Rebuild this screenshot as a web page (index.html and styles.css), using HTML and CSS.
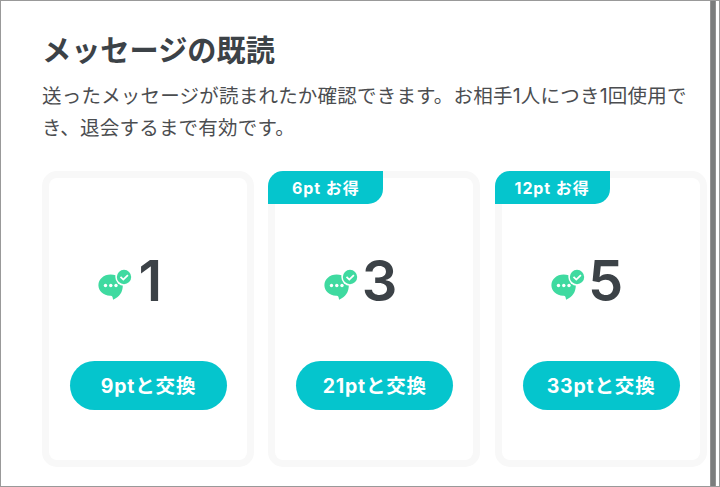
FILE: index.html
```html
<!DOCTYPE html>
<html lang="ja">
<head>
<meta charset="utf-8">
<title>メッセージの既読</title>
<link rel="stylesheet" href="styles.css">
</head>
<body>
<svg class="symbols" aria-hidden="true">
  <symbol id="read" viewBox="0 0 34 32">
    <path fill="#3fdaa0" d="M12.600 5.500C5.600 5.500 .4 10.300.4 16.300c0 5.800 5 10.300 11.600 10.500 1.300 0 2.300.3 2.500 1.300l.6 2.600C21.500 28 24.800 23 24.800 16.500 24.800 10.300 19.600 5.500 12.600 5.500z"/>
    <circle cx="26" cy="8" r="8.700" fill="#fff"/>
    <circle cx="26" cy="8" r="7.200" fill="#3fdaa0"/>
    <path d="M22.500 7.900l2.800 2.700 4.600-4.500" fill="none" stroke="#fff" stroke-width="1.800"/>
    <g fill="#fff"><circle cx="7.500" cy="16.500" r="1.700"/><circle cx="12.800" cy="16.500" r="1.700"/><circle cx="18" cy="16.500" r="1.700"/></g>
  </symbol>
</svg>
<div class="frame">
  <main class="content">
    <h1 class="title">メッセージの既読</h1>
    <p class="description">送ったメッセージが読まれたか確認できます。お相手1人につき1回使用で<br>き、退会するまで有効です。</p>
    <div class="plans">
      <section class="card">
        <div class="amount"><svg class="icon"><use href="#read"/></svg><span class="count count-narrow">1</span></div>
        <button class="exchange">9ptと交換</button>
      </section>
      <section class="card">
        <span class="badge">6pt お得</span>
        <div class="amount"><svg class="icon"><use href="#read"/></svg><span class="count">3</span></div>
        <button class="exchange">21ptと交換</button>
      </section>
      <section class="card">
        <span class="badge">12pt お得</span>
        <div class="amount"><svg class="icon"><use href="#read"/></svg><span class="count">5</span></div>
        <button class="exchange">33ptと交換</button>
      </section>
    </div>
  </main>
  <div class="edge"></div>
</div>
</body>
</html>
```
FILE: styles.css
```css
* {
  box-sizing: border-box;
}

body {
  margin: 0;
  background: #fff;
  color: #3c4247;
  font-family: Inter, "Noto Sans CJK JP", sans-serif;
}

.symbols {
  display: none;
}

.frame {
  display: flex;
  width: 720px;
  height: 487px;
  border: 1px solid #999;
  overflow: hidden;
}

.content {
  flex: none;
  width: 709px;
  padding: 30px 0 0 41px;
}

.edge {
  width: 6px;
  background: #7b7d7d;
  border: solid #929292;
  border-width: 0 1px;
}

.title {
  margin: 0;
  font-size: 29.2px;
  line-height: 40px;
  font-weight: 700;
  white-space: nowrap;
}

.description {
  margin: 10px 0 0;
  font-size: 19.5px;
  line-height: 31.5px;
  letter-spacing: 0.21px;
  color: #4b4d50;
  white-space: nowrap;
}

.plans {
  display: flex;
  gap: 14.300px;
  margin-top: 27px;
}

.card {
  position: relative;
  flex: none;
  width: 212px;
  height: 296px;
  padding: 78px 21px 0;
  border: 7px solid #f8f8f8;
  border-radius: 15px;
}

.badge {
  position: absolute;
  top: -7px;
  left: -7px;
  width: 115px;
  height: 33px;
  border-radius: 15px 0 15px 0;
  background: #05c5cd;
  color: #fff;
  font-size: 16px;
  font-weight: 700;
  line-height: 34px;
  letter-spacing: 0.9px;
  text-align: center;
  white-space: nowrap;
}

.amount {
  display: flex;
  align-items: center;
  height: 50px;
  padding-left: 28px;
}

.icon {
  flex: none;
  width: 34px;
  height: 32px;
  margin-top: 7px;
}

.count {
  width: 40px;
  margin-left: 3.5px;
  font-size: 56px;
  font-weight: 600;
  line-height: 50px;
}

.count-narrow {
  padding-left: 3px;
}

.exchange {
  display: block;
  width: 157px;
  height: 49px;
  margin: 55px 0 0;
  padding: 0 0 2px;
  border: 0;
  border-radius: 25px;
  background: #05c5cd;
  color: #fff;
  font: inherit;
  font-size: 19.500px;
  font-weight: 700;
  letter-spacing: 0.8px;
  white-space: nowrap;
}
```
